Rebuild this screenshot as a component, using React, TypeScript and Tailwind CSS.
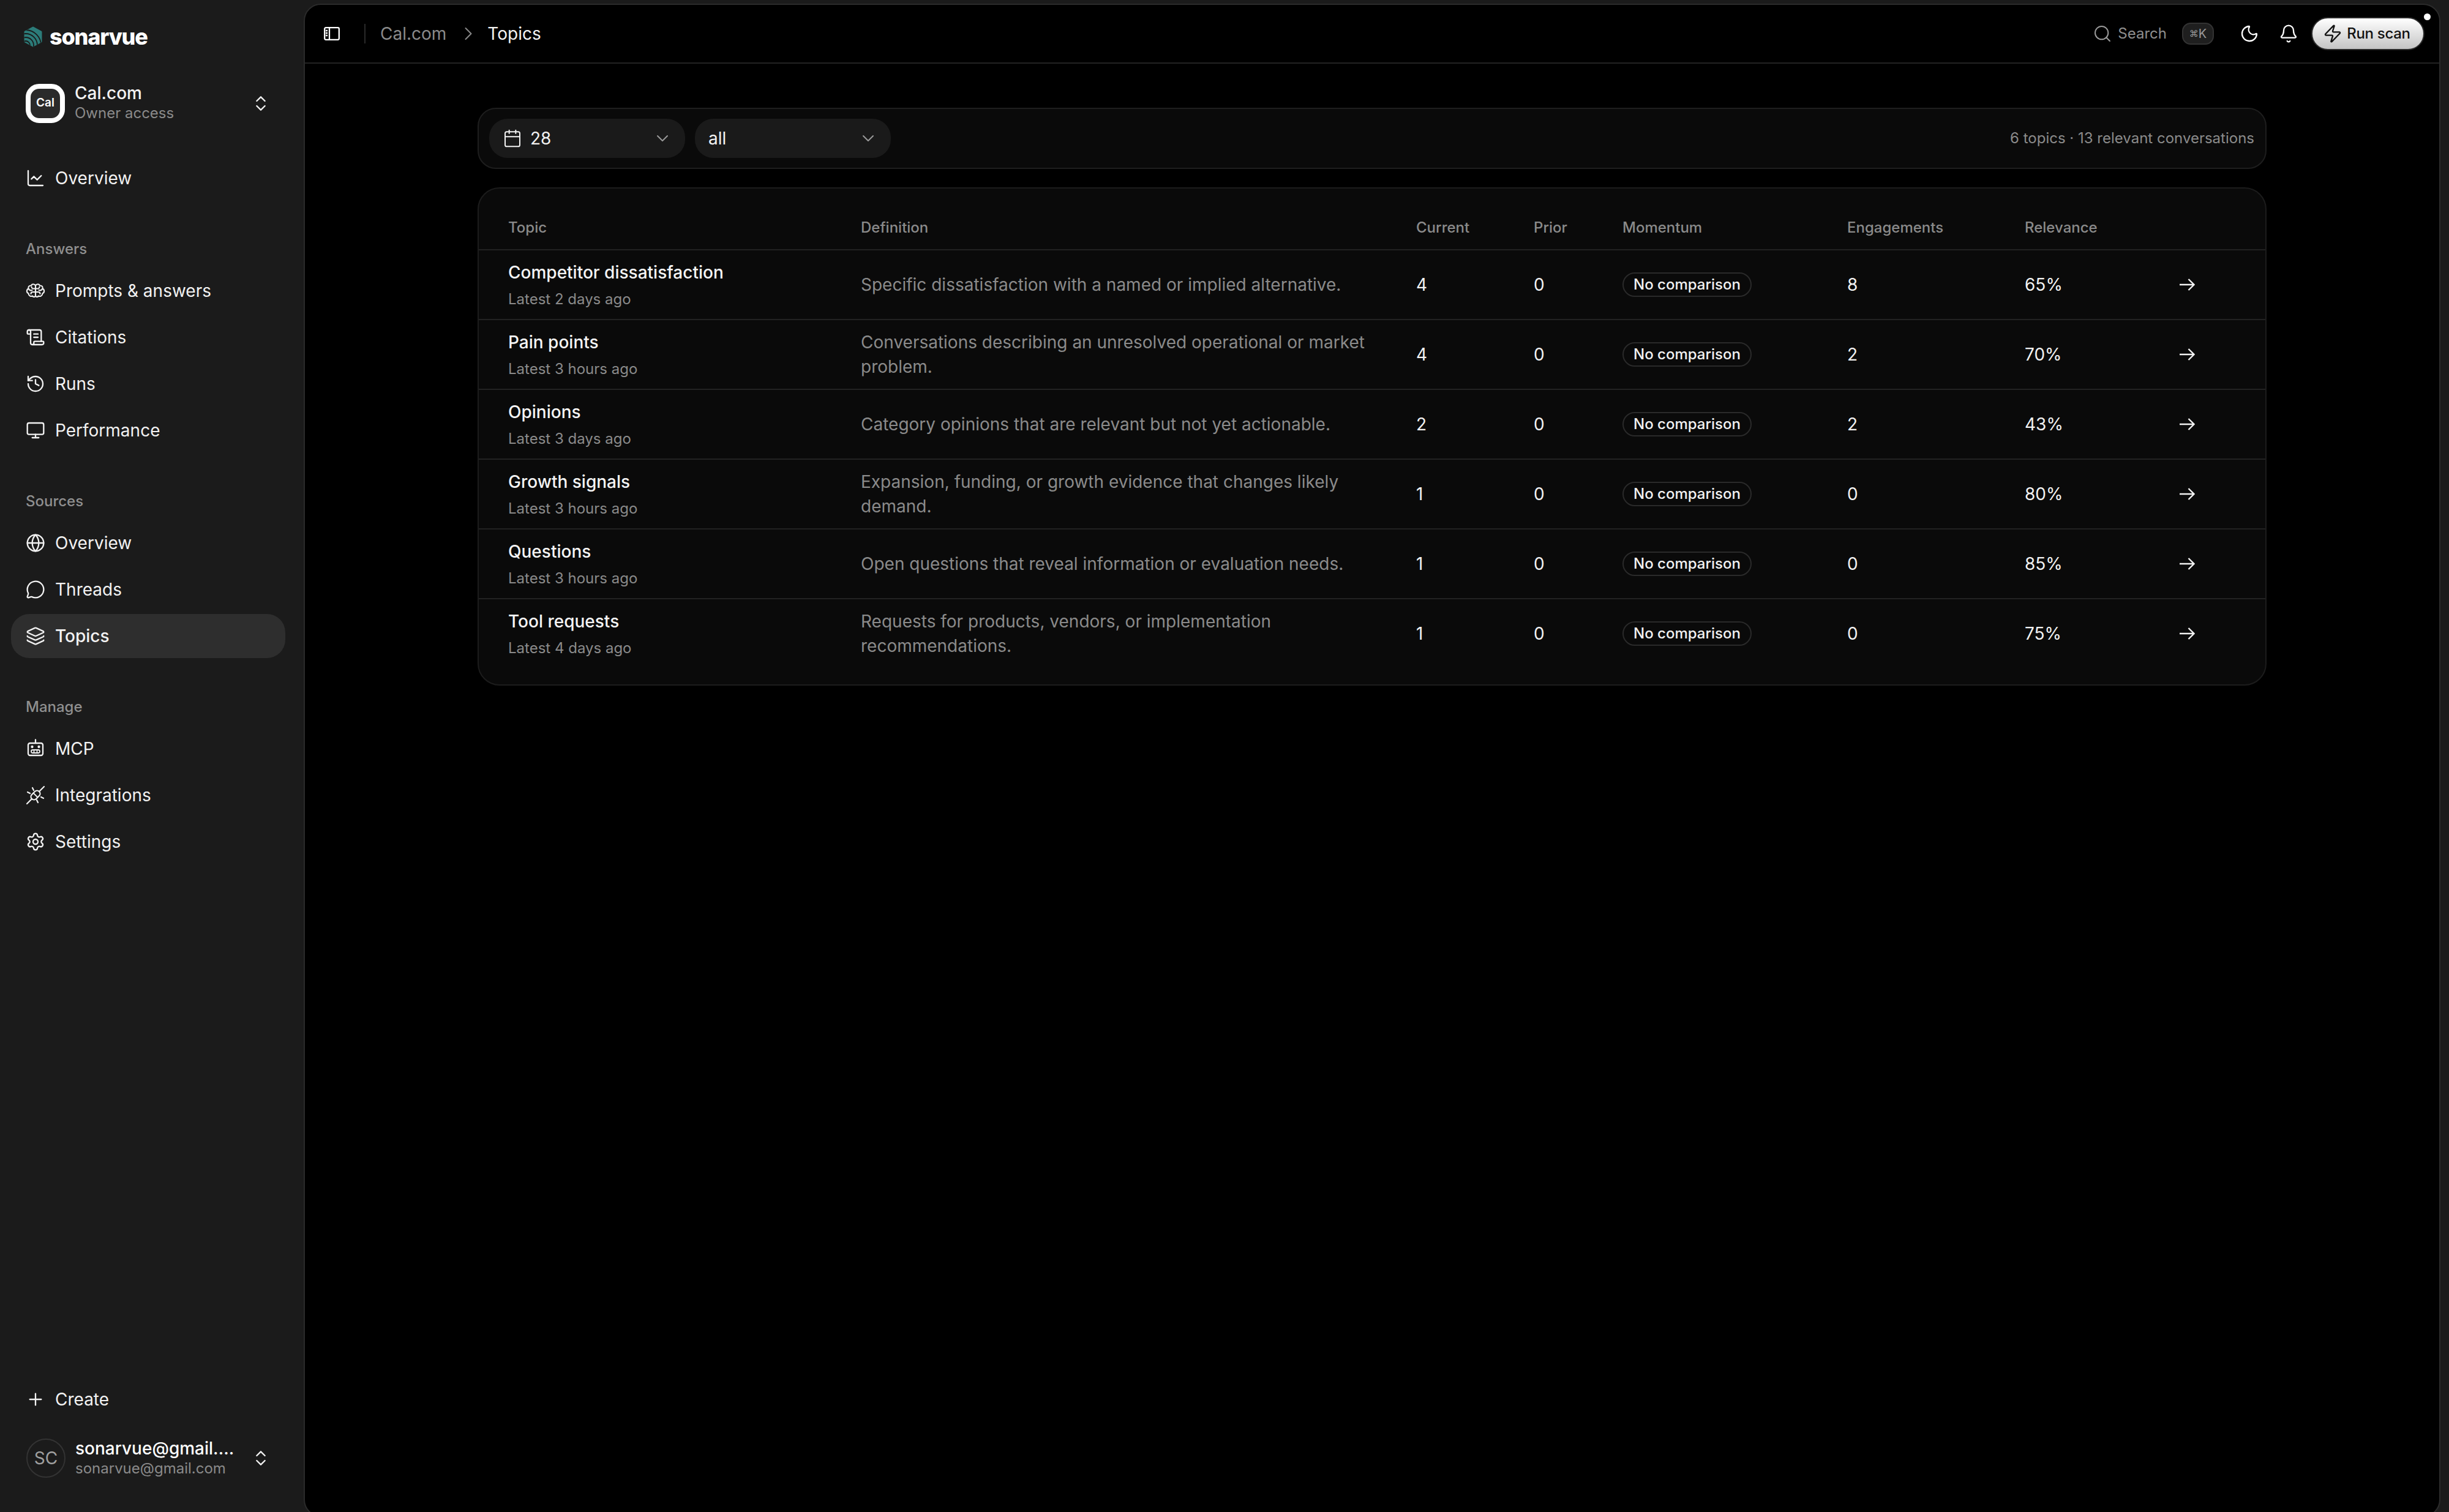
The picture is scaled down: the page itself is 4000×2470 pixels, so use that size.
import {
  Bell,
  Calendar,
  ChartLine,
  ChevronDown,
  ChevronRight,
  ChevronsUpDown,
  Globe,
  History,
  Layers,
  MessageCircle,
  Monitor,
  Moon,
  Plus,
  ScrollText,
  Search,
  Settings,
  Zap,
} from 'lucide-react';
import type { ReactNode } from 'react';

const topics = [
  { name: 'Competitor dissatisfaction', latest: 'Latest 2 days ago', definition: 'Specific dissatisfaction with a named or implied alternative.', current: 4, engagements: 8, relevance: '65%' },
  { name: 'Pain points', latest: 'Latest 3 hours ago', definition: 'Conversations describing an unresolved operational or market problem.', current: 4, engagements: 2, relevance: '70%' },
  { name: 'Opinions', latest: 'Latest 3 days ago', definition: 'Category opinions that are relevant but not yet actionable.', current: 2, engagements: 2, relevance: '43%' },
  { name: 'Growth signals', latest: 'Latest 3 hours ago', definition: 'Expansion, funding, or growth evidence that changes likely demand.', current: 1, engagements: 0, relevance: '80%' },
  { name: 'Questions', latest: 'Latest 3 hours ago', definition: 'Open questions that reveal information or evaluation needs.', current: 1, engagements: 0, relevance: '85%' },
  { name: 'Tool requests', latest: 'Latest 4 days ago', definition: 'Requests for products, vendors, or implementation recommendations.', current: 1, engagements: 0, relevance: '75%' },
];

const columns = 'grid grid-cols-[576px_907px_192px_145px_367px_290px_253px_minmax(0,1fr)] items-center pl-[48px]';

function Logo() {
  return (
    <svg width="32" height="34" viewBox="0 0 32 34" fill="none">
      <defs>
        <clipPath id="hex">
          <path d="M16 0.5 30.5 8.5V25.5L16 33.5 1.5 25.5V8.5Z" />
        </clipPath>
      </defs>
      <path d="M16 2 29 9V25L16 32 3 25V9Z" fill="#2c7c79" stroke="#2c7c79" strokeWidth="3" strokeLinejoin="round" />
      <g clipPath="url(#hex)" stroke="#1b1b1b" strokeWidth="1.8">
        <circle cx="4" cy="31" r="7" />
        <circle cx="4" cy="31" r="13" />
        <circle cx="4" cy="31" r="19" />
        <circle cx="4" cy="31" r="25" />
      </g>
    </svg>
  );
}

function BrainIcon() {
  return (
    <svg width="32" height="32" viewBox="0 0 32 32" fill="none" stroke="currentColor" strokeWidth="2.1" strokeLinecap="round" strokeLinejoin="round">
      <path d="M16 7.500C14.500 4.500 10 4.500 9 7.500C5.500 7.200 3.500 10 4.500 12.500C1 14 1 19 4.500 20.200C4.500 24 8.500 26 11 24.500C13 27 16 26 16 23.500Z" />
      <path d="M16 7.500C17.500 4.500 22 4.500 23 7.500C26.500 7.200 28.500 10 27.500 12.500C31 14 31 19 27.500 20.200C27.500 24 23.500 26 21 24.500C19 27 16 26 16 23.500Z" />
      <path d="M16 12.500H12.500A3 3 0 0 1 9.500 9.500M16 18H11.500A3 3 0 0 0 8.500 21M4.500 12.500C6 15.500 9 15.500 10.500 15M16 12.500H19.500A3 3 0 0 0 22.500 9.500M16 18H20.500A3 3 0 0 1 23.500 21M27.500 12.500C26 15.500 23 15.500 21.500 15" />
    </svg>
  );
}

function BotIcon() {
  return (
    <svg width="32" height="32" viewBox="0 0 32 32" fill="none" stroke="currentColor" strokeWidth="2.3" strokeLinecap="round">
      <rect x="4" y="7" width="24" height="20" rx="3" />
      <path d="M16 1.5V7" />
      <circle cx="10.5" cy="13" r="1" fill="currentColor" />
      <circle cx="21.5" cy="13" r="1" fill="currentColor" />
      <rect x="9" y="18" width="14" height="5" rx="2.5" strokeWidth="1.8" />
      <path d="M13.5 18v5M18.500 18v5" strokeWidth="1.6" />
    </svg>
  );
}

function PlugIcon() {
  return (
    <svg width="32" height="32" viewBox="0 0 32 32" fill="none" stroke="currentColor" strokeWidth="2.2" strokeLinecap="round">
      <path d="M2 30 10 22M22 10 30 2" />
      <rect x="7.500" y="11" width="17" height="10" rx="5" transform="rotate(-45 16 16)" />
      <path d="M13 13 19 19" strokeWidth="1.8" />
      <path d="M11 4 13 8M3 11 7 13M25 19 29 21M18 24 20 28" />
    </svg>
  );
}

function PanelIcon() {
  return (
    <svg width="26" height="22" viewBox="0 0 26 22" fill="none" stroke="currentColor" strokeWidth="2.3">
      <rect x="1.200" y="1.200" width="23.600" height="19.600" rx="2" />
      <path d="M9 1.200V20.800M3 6H6M3 10H6M3 14H6" />
    </svg>
  );
}

function RowArrow() {
  return (
    <svg width="25" height="20" viewBox="0 0 25 20" fill="none" stroke="currentColor" strokeWidth="2.4">
      <path d="M0 10H23M14.500 1 23.500 10 14.500 19" />
    </svg>
  );
}

function NavItem({ icon, label, active }: { icon: ReactNode; label: string; active?: boolean }) {
  return (
    <div className={`flex h-[72px] items-center gap-[16px] rounded-[30px] pl-[24px] text-[28px] text-[#f2f2f2] ${active ? 'bg-[#2e2e2e] font-medium' : ''}`}>
      {icon}
      <span>{label}</span>
    </div>
  );
}

function NavGroup({ title, children }: { title: string; children: ReactNode }) {
  return (
    <div className="mt-[46px]">
      <div className="flex h-[66px] items-center pl-[24px] pt-[1px] text-[24px] font-medium text-[#8f8f8f]">{title}</div>
      <div className="flex flex-col gap-[4px]">{children}</div>
    </div>
  );
}

function Sidebar() {
  const icon = { size: 32, strokeWidth: 1.75 };
  return (
    <aside className="flex h-screen w-[496px] shrink-0 flex-col pb-[55px] pl-[18px] pr-[30px] pt-[43px]">
      <div className="flex items-center gap-[11px] pl-[20px]">
        <Logo />
        <span className="text-[36px] leading-[34px] font-extrabold tracking-[-1.2px] text-white">sonarvue</span>
      </div>

      <div className="mt-[59px] flex items-center pl-[24px] pr-[24px]">
        <div className="flex h-[64px] w-[64px] shrink-0 items-center justify-center rounded-[22px] border-[8px] border-white bg-[#2a2a2a] text-[19px] font-semibold text-white">
          Cal
        </div>
        <div className="ml-[16px] min-w-0 flex-1">
          <div className="text-[28px] leading-[32px] font-medium text-[#f2f2f2]">Cal.com</div>
          <div className="pt-[1px] text-[24px] leading-[32px] text-[#8a8a8a]">Owner access</div>
        </div>
        <ChevronsUpDown size={32} strokeWidth={1.75} className="text-[#f2f2f2]" />
      </div>

      <div className="mt-[54px]">
        <NavItem icon={<ChartLine {...icon} />} label="Overview" />
      </div>

      <NavGroup title="Answers">
        <NavItem icon={<BrainIcon />} label="Prompts & answers" />
        <NavItem icon={<ScrollText {...icon} />} label="Citations" />
        <NavItem icon={<History {...icon} />} label="Runs" />
        <NavItem icon={<Monitor {...icon} />} label="Performance" />
      </NavGroup>

      <NavGroup title="Sources">
        <NavItem icon={<Globe {...icon} />} label="Overview" />
        <NavItem icon={<MessageCircle {...icon} />} label="Threads" />
        <NavItem icon={<Layers {...icon} />} label="Topics" active />
      </NavGroup>

      <NavGroup title="Manage">
        <NavItem icon={<BotIcon />} label="MCP" />
        <NavItem icon={<PlugIcon />} label="Integrations" />
        <NavItem icon={<Settings {...icon} />} label="Settings" />
      </NavGroup>

      <div className="mt-auto">
        <NavItem icon={<Plus {...icon} />} label="Create" />
        <div className="mt-[27px] flex items-center pl-[25px] pr-[24px]">
          <div className="flex h-[64px] w-[64px] shrink-0 items-center justify-center rounded-full border-2 border-[#333333] text-[28px] text-[#a0a0a0]">
            SC
          </div>
          <div className="ml-[16px] min-w-0 flex-1 pr-[26px]">
            <div className="truncate text-[28px] leading-[34px] font-medium text-white">sonarvue@gmail.com</div>
            <div className="text-[24px] leading-[32px] whitespace-nowrap text-[#8a8a8a]">sonarvue@gmail.com</div>
          </div>
          <ChevronsUpDown size={32} strokeWidth={1.75} className="shrink-0 text-[#f2f2f2]" />
        </div>
      </div>
    </aside>
  );
}

function Header() {
  return (
    <header className="relative flex h-[96px] shrink-0 items-center border-b-2 border-[#232323] pl-[31px] pr-[24px]">
      <span className="text-white">
        <PanelIcon />
      </span>
      <div className="ml-[40px] h-[32px] w-[2px] bg-[#2a2a2a]" />
      <span className="ml-[24px] text-[28px] text-[#8a8a8a]">Cal.com</span>
      <ChevronRight size={36} strokeWidth={1.3} className="ml-[18px] text-[#8a8a8a]" />
      <span className="ml-[13px] text-[28px] text-[#f2f2f2]">Topics</span>

      <div className="ml-auto flex items-center">
        <Search size={32} strokeWidth={1.5} className="text-[#9a9a9a]" />
        <span className="ml-[9px] text-[24px] text-[#8f8f8f]">Search</span>
        <span className="ml-[25px] flex h-[36px] w-[52px] items-center justify-center rounded-[14px] border-2 border-[#333333] bg-[#1f1f1f] text-[20px] text-[#9a9a9a]">
          <span className="text-[15px]">⌘</span>K
        </span>
        <Moon size={32} strokeWidth={1.75} className="ml-[42px] text-white" />
        <Bell size={32} strokeWidth={1.75} className="ml-[32px] text-white" />
        <button className="ml-[21px] flex h-[54px] w-[185px] items-center justify-center gap-[7px] rounded-full border-2 border-[#2a2a2a] bg-linear-to-b from-white to-[#c4c4c4] pr-[4px] text-[24px] font-medium tracking-[-0.3px] text-[#111111]">
          <Zap size={32} strokeWidth={1.75} />
          Run scan
        </button>
      </div>
      <span className="absolute right-[14px] top-[14px] h-[11px] w-[11px] rounded-full bg-white" />
    </header>
  );
}

function FilterSelect({ label, icon }: { label: string; icon?: ReactNode }) {
  return (
    <div className="flex h-[64px] w-[320px] items-center rounded-[30px] bg-[#1a1a1a] pl-[22px] pr-[21px] text-[28px] text-[#f2f2f2]">
      {icon}
      <span>{label}</span>
      <ChevronDown size={32} strokeWidth={1.5} className="ml-auto text-[#9a9a9a]" />
    </div>
  );
}

function TopicsTable() {
  return (
    <div className="mt-[30px] rounded-[36px] border-2 border-[#1c1c1c] bg-[#0a0a0a] pb-[27px] pt-[28px]">
      <div className={`${columns} h-[71px] text-[24px] font-medium text-[#8a8a8a]`}>
        <div>Topic</div>
        <div>Definition</div>
        <div>Current</div>
        <div>Prior</div>
        <div>Momentum</div>
        <div>Engagements</div>
        <div>Relevance</div>
        <div />
      </div>
      {topics.map((topic) => (
        <div key={topic.name} className={`${columns} h-[114px] border-t-2 border-[#222222] text-[28px]`}>
          <div>
            <div className="leading-[40px] font-medium text-[#f4f4f4]">{topic.name}</div>
            <div className="mt-[8px] text-[24px] leading-[32px] text-[#8a8a8a]">{topic.latest}</div>
          </div>
          <div className="pr-[48px] leading-[40px] text-[#8a8a8a]">{topic.definition}</div>
          <div className="text-[#f2f2f2]">{topic.current}</div>
          <div className="text-[#f2f2f2]">0</div>
          <div className="flex">
            <span className="flex h-[40px] items-center rounded-full border-2 border-[#2a2a2a] px-[16px] text-[24px] font-medium text-[#f2f2f2]">
              No comparison
            </span>
          </div>
          <div className="text-[#f2f2f2]">{topic.engagements}</div>
          <div className="text-[#f2f2f2]">{topic.relevance}</div>
          <div className="text-[#f2f2f2]">
            <RowArrow />
          </div>
        </div>
      ))}
    </div>
  );
}

export default function App() {
  return (
    <div className="flex h-screen overflow-hidden bg-[#1b1b1b] font-[family-name:Inter,sans-serif]">
      <Sidebar />
      <main className="mb-[-8px] mr-[14px] mt-[6px] flex min-w-0 flex-1 flex-col rounded-[28px] border-2 border-[#2b2b2b] bg-black">
        <Header />
        <div className="mx-auto mt-[72px] w-[2922px]">
          <div className="flex h-[100px] items-center rounded-[30px] border-2 border-[#1e1e1e] bg-[#0a0a0a] pl-[17px] pr-[18px]">
            <div className="flex gap-[16px]">
              <FilterSelect label="28" icon={<Calendar size={32} strokeWidth={1.5} className="mr-[13px]" />} />
              <FilterSelect label="all" />
            </div>
            <span className="ml-auto text-[24px] text-[#8a8a8a]">6 topics · 13 relevant conversations</span>
          </div>
          <TopicsTable />
        </div>
      </main>
    </div>
  );
}
